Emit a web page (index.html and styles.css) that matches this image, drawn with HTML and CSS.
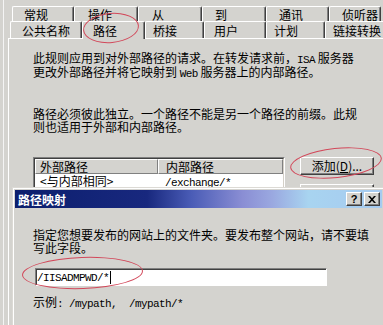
FILE: index.html
```html
<!DOCTYPE html>
<html lang="zh-CN">
<head>
    <meta charset="UTF-8">
    <title>路径映射</title>
    <link rel="stylesheet" href="styles.css">
</head>
<body>
    <div class="sheet">
        <div class="tabs tabs-back">
            <div class="tab">常规</div>
            <div class="tab">操作</div>
            <div class="tab">从</div>
            <div class="tab">到</div>
            <div class="tab">通讯</div>
            <div class="tab">侦听器</div>
        </div>
        <div class="tabs tabs-front">
            <div class="tab">公共名称</div>
            <div class="tab active">路径</div>
            <div class="tab">桥接</div>
            <div class="tab">用户</div>
            <div class="tab">计划</div>
            <div class="tab">链接转换</div>
        </div>
        <div class="panel">
            <p class="intro">此规则应用到对外部路径的请求。在转发请求前，<span class="m">ISA</span> 服务器<br>更改外部路径并将它映射到 <span class="m">Web</span> 服务器上的内部路径。</p>
            <p class="note">路径必须彼此独立。一个路径不能是另一个路径的前缀。此规<br>则也适用于外部和内部路径。</p>
            <div class="paths">
                <div class="list">
                    <div class="list-inner">
                        <div class="list-head">
                            <div class="col col-ext">外部路径</div>
                            <div class="col col-int">内部路径</div>
                        </div>
                        <div class="list-row">
                            <div class="col col-ext">&lt;与内部相同&gt;</div>
                            <div class="col col-int"><span class="m">/exchange/*</span></div>
                        </div>
                    </div>
                </div>
                <div class="actions">
                    <button class="btn">添加(<u>D</u>)...</button>
                    <button class="btn"></button>
                </div>
            </div>
        </div>
    </div>

    <!-- dialog over the property sheet -->
    <div class="dialog">
        <div class="titlebar">
            <span class="title">路径映射</span>
            <span class="cap">?</span>
            <span class="cap">
                <svg width="8" height="7" viewBox="0 0 8 7"><path d="M0 0h2l2 2.3L6 0h2L5 3.5 8 7H6L4 4.7 2 7H0l3-3.5z" fill="#000"/></svg>
            </span>
        </div>
        <div class="dialog-body">
            <p class="prompt">指定您想要发布的网站上的文件夹。要发布整个网站，请不要填<br>写此字段。</p>
            <div class="field"><span class="m">/IISADMPWD/*</span><span class="caret"></span></div>
            <p class="example">示例<span class="m pre">: /mypath,  /mypath/*</span></p>
        </div>
    </div>

    <div class="ring ring-tab"></div>
    <div class="ring ring-add"></div>
    <div class="ring ring-field"></div>
</body>
</html>
```

FILE: styles.css
```css
* {
    box-sizing: border-box;
}
body {
    margin: 0;
    width: 383px;
    height: 325px;
    overflow: hidden;
    position: relative;
    background: #d4d3cf;
    font-family: "Noto Sans CJK SC", "Liberation Sans", sans-serif;
    font-size: 12px;
    line-height: 13px;
    color: #000;
}
p {
    margin: 0;
    height: 26px;
}
.m {
    font-family: "Liberation Mono", monospace;
    font-size: 11px;
    line-height: 10px;
    letter-spacing: -0.6px;
}
.pre {
    white-space: pre;
}

/* property sheet */
.sheet {
    margin-left: 3px;
    width: 400px;
    height: 325px;
    border-left: 1px solid #f4f4f4;
    display: flex;
    flex-direction: column;
}
.tabs {
    display: flex;
}
.tabs-back {
    margin-top: 6px;
    padding-left: 8px;
}
.tabs-front {
    padding-left: 6px;
}
.tab {
    border: 1px solid #fff;
    border-bottom: none;
    border-right-color: #404040;
    box-shadow: inset -1px 0 #808080;
    border-radius: 2px 2px 0 0;
    white-space: nowrap;
    background: #d4d3cf;
}
.tabs-back .tab {
    height: 15px;
    padding: 1px 0 0 12px;
    line-height: 13px;
}
.tabs-back .tab:nth-child(1) { width: 62px; padding-left: 11px; }
.tabs-back .tab:nth-child(2) { width: 64px; padding-left: 13px; }
.tabs-back .tab:nth-child(3) { width: 64px; padding-left: 13px; }
.tabs-back .tab:nth-child(4) { width: 64px; }
.tabs-back .tab:nth-child(5) { width: 63px; }
.tabs-back .tab:nth-child(6) { width: 52px; }

.tabs-front .tab {
    height: 17px;
    padding: 2px 0 0 7px;
    line-height: 14px;
}
.tabs-front .tab:nth-child(1) { width: 72px; padding-left: 11px; }
.tabs-front .tab:nth-child(2) { width: 63px; padding-left: 10px; }
.tabs-front .tab:nth-child(3) { width: 59px; }
.tabs-front .tab:nth-child(4) { width: 62px; padding-left: 9px; }
.tabs-front .tab:nth-child(5) { width: 59px; }
.tabs-front .tab:nth-child(6) { width: 62px; }

.tab.active {
    position: relative;
    z-index: 1;
    height: 18px;
    margin-bottom: -1px;
}

.panel {
    flex: 1;
    margin-left: 4px;
    border-top: 1px solid #fff;
    border-left: 1px solid #fff;
    padding-left: 24px;
}
.intro {
    margin-top: 12px;
}
.note {
    margin-top: 30px;
}
.paths {
    display: flex;
    align-items: flex-start;
    margin-top: 24px;
}
.list {
    width: 252px;
    height: 80px;
    border: 1px solid;
    border-color: #808080 #fff #fff #808080;
}
.list-inner {
    height: 100%;
    border: 1px solid;
    border-color: #404040 #d4d0c8 #d4d0c8 #404040;
    background: #fff;
}
.list-head {
    display: flex;
    height: 15px;
    background: #d4d3cf;
}
.list-head .col {
    border: 1px solid;
    border-color: #fff #808080 #808080 #fff;
    line-height: 13px;
}
.list-row {
    display: flex;
    height: 13px;
    line-height: 13px;
}
.col-ext {
    width: 123px;
    padding-left: 5px;
}
.list-head .col-ext {
    padding-left: 4px;
}
.col-int {
    flex: 1;
    padding-left: 7px;
}
.actions {
    margin-left: 15px;
    display: flex;
    flex-direction: column;
    gap: 9px;
}
.btn {
    width: 74px;
    height: 18px;
    padding: 0;
    font: inherit;
    line-height: 14px;
    color: #000;
    background: #d4d3cf;
    border: 1px solid;
    border-color: #fff #404040 #404040 #fff;
    box-shadow: inset -1px -1px #808080;
}

/* path mapping dialog */
.dialog {
    position: absolute;
    left: 12px;
    top: 187px;
    width: 373px;
    height: 160px;
    padding: 2px;
    background: #d4d3cf;
    border: 1px solid #dcdad5;
    box-shadow: inset 1px 1px #fff;
    z-index: 2;
}
.titlebar {
    height: 18px;
    display: flex;
    align-items: center;
    padding: 0 2px 0 3px;
    background: linear-gradient(to right, #0c1f6e 0%, #18287e 36%, #4a5cb6 48%, #8a8ed4 62%, #9aa8e0 70%, #a8d4f0 80%, #a6caf0 100%);
    color: #fff;
    font-weight: bold;
}
.title {
    flex: 1;
}
.cap {
    width: 16px;
    height: 14px;
    display: flex;
    align-items: center;
    justify-content: center;
    background: #d4d3cf;
    border: 1px solid;
    border-color: #fff #404040 #404040 #fff;
    box-shadow: inset -1px -1px #808080;
    color: #000;
    font-family: "Liberation Sans", sans-serif;
    font-size: 11px;
    font-weight: bold;
    line-height: 12px;
}
.cap + .cap {
    margin-left: 2px;
}
.dialog-body {
    padding: 20px 0 0 18px;
}
.field {
    width: 292px;
    height: 18px;
    margin: 14px 0 0 2px;
    padding: 1px 0 0 1px;
    display: flex;
    align-items: center;
    background: #fff;
    border: 1px solid;
    border-color: #808080 #fff #fff #808080;
    box-shadow: inset 1px 1px #404040;
}
.caret {
    width: 1px;
    height: 13px;
    margin-left: 1px;
    background: #000;
}
.example {
    margin-top: 9px;
    height: 13px;
}

/* red annotation rings */
.ring {
    position: absolute;
    border: 1px solid #d2485a;
    border-radius: 50%;
    z-index: 5;
}
.ring-tab {
    left: 83px;
    top: 13px;
    width: 56px;
    height: 30px;
    transform: rotate(-5deg);
}
.ring-add {
    left: 290px;
    top: 148px;
    width: 92px;
    height: 30px;
    transform: rotate(-6deg);
}
.ring-field {
    left: 22px;
    top: 257px;
    width: 121px;
    height: 32px;
    transform: rotate(-2deg);
}
```
